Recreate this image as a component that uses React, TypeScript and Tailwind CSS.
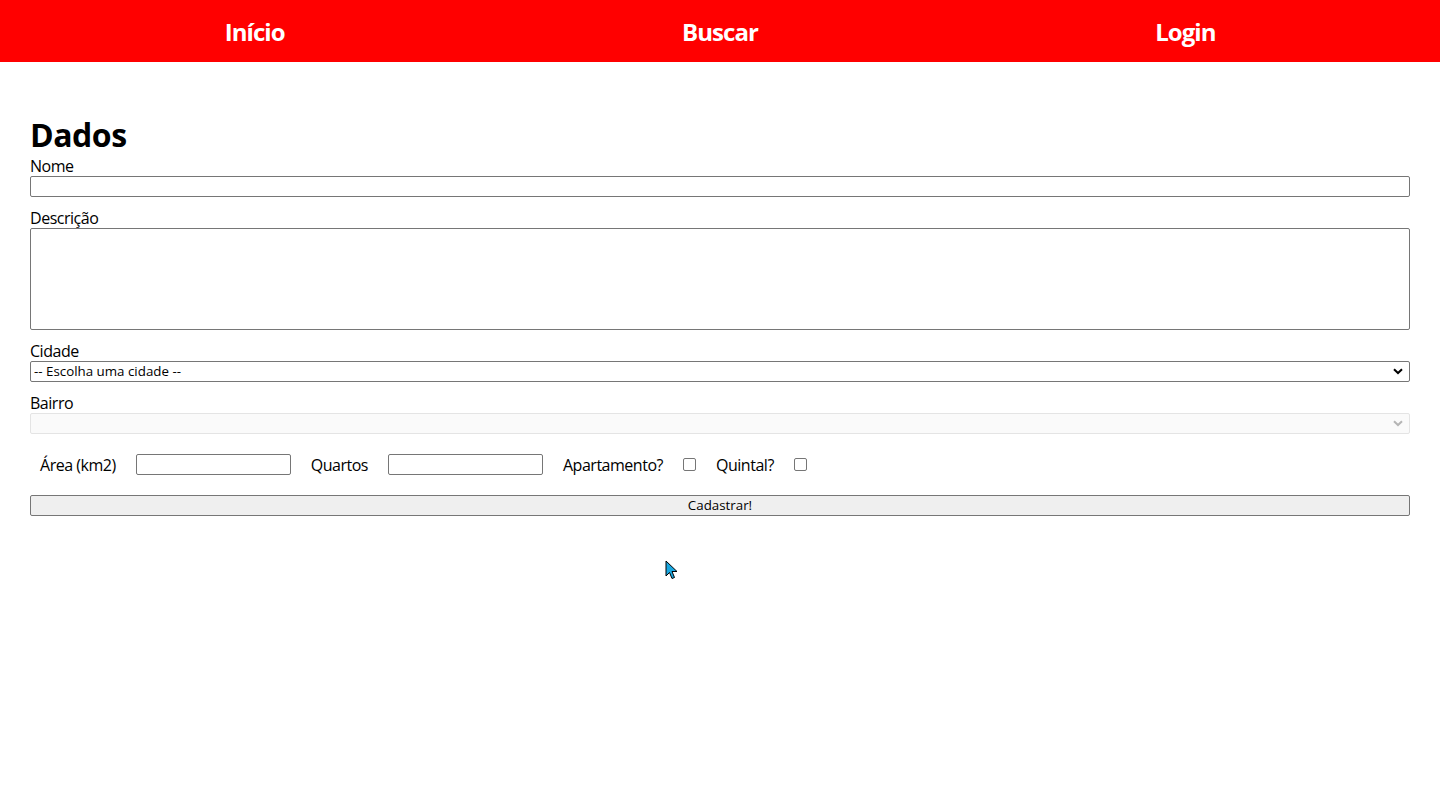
import React from "react";

const Chevron = ({ color }: { color: string }) => (
  <svg width="10" height="7" viewBox="0 0 10 7" className="pointer-events-none absolute right-[7px] top-[7px]">
    <path d="M1 1.2 L5 5 L9 1.2" fill="none" stroke={color} strokeWidth="2" />
  </svg>
);

export default function App() {
  return (
    <div className="min-h-screen bg-white text-black font-['Open_Sans','Noto_Sans',sans-serif] tracking-[-0.03em] relative">
      <nav className="h-[62px] bg-[#ff0000] grid grid-cols-3 items-center px-[22px]">
        <a className="text-center text-[24px] leading-[32px] pt-[2px] font-bold text-white tracking-[-0.04em]">Início</a>
        <a className="text-center text-[24px] leading-[32px] pt-[2px] font-bold text-white tracking-[-0.04em]">Buscar</a>
        <a className="text-center text-[24px] leading-[32px] pt-[2px] font-bold text-white tracking-[-0.04em]">Login</a>
      </nav>
      <main className="px-[30px] pt-[51px]">
        <h1 className="text-[32px] leading-[42px] pt-[1px] -mb-[1px] font-bold">Dados</h1>
        <form className="flex flex-col">
          <label className="block text-[16px] leading-[21px] pt-[1px] -mb-[1px]">Nome</label>
          <input type="text" className="block w-full h-[21px] border border-[#767676] rounded-[2px] bg-white px-[2px] text-[13.33px]" />

          <label className="block text-[16px] leading-[21px] mt-[10px] pt-[1px] -mb-[1px]">Descrição</label>
          <textarea className="block w-full h-[102px] border border-[#767676] rounded-[2px] bg-white resize-none" />

          <label className="block text-[16px] leading-[21px] mt-[10px] pt-[1px] -mb-[1px]">Cidade</label>
          <div className="relative">
            <select className="block w-full h-[21px] appearance-none border border-[#767676] rounded-[2px] bg-white pl-[3px] text-[13.33px] leading-[19px] text-black tracking-normal">
              <option>-- Escolha uma cidade --</option>
            </select>
            <Chevron color="#000" />
          </div>

          <label className="block text-[16px] leading-[21px] mt-[10px] pt-[1px] -mb-[1px]">Bairro</label>
          <div className="relative">
            <select disabled className="block w-full h-[21px] appearance-none border border-[#e4e4e4] rounded-[2px] bg-[#fafafa] text-[13.33px]">
              <option></option>
            </select>
            <Chevron color="#b5b5b5" />
          </div>

          <div className="flex items-center gap-[20px] pl-[10px] mt-[20px] h-[21px] text-[16px]">
            <span>Área (km2)</span>
            <input type="text" className="w-[155px] h-[21px] border border-[#767676] rounded-[2px] bg-white" />
            <span>Quartos</span>
            <input type="text" className="w-[155px] h-[21px] border border-[#767676] rounded-[2px] bg-white" />
            <span>Apartamento?</span>
            <input type="checkbox" className="appearance-none w-[13px] h-[13px] border border-[#767676] rounded-[2px] bg-white" />
            <span>Quintal?</span>
            <input type="checkbox" className="appearance-none w-[13px] h-[13px] border border-[#767676] rounded-[2px] bg-white" />
          </div>

          <button type="button" className="mt-[20px] w-full h-[21px] border border-[#767676] rounded-[2px] bg-[#efefef] text-[13.33px] leading-[19px] tracking-normal">
            Cadastrar!
          </button>
        </form>
      </main>
      <svg width="14" height="22" viewBox="0 0 14 22" className="absolute left-[665px] top-[560px]">
        <path d="M1 1 L1 16 L4.5 12.5 L7 18.5 L9.5 17.5 L7 11.5 L12 11.5 Z" fill="#1aa7e0" stroke="#000" strokeWidth="1" strokeLinejoin="round" />
      </svg>
    </div>
  );
}
